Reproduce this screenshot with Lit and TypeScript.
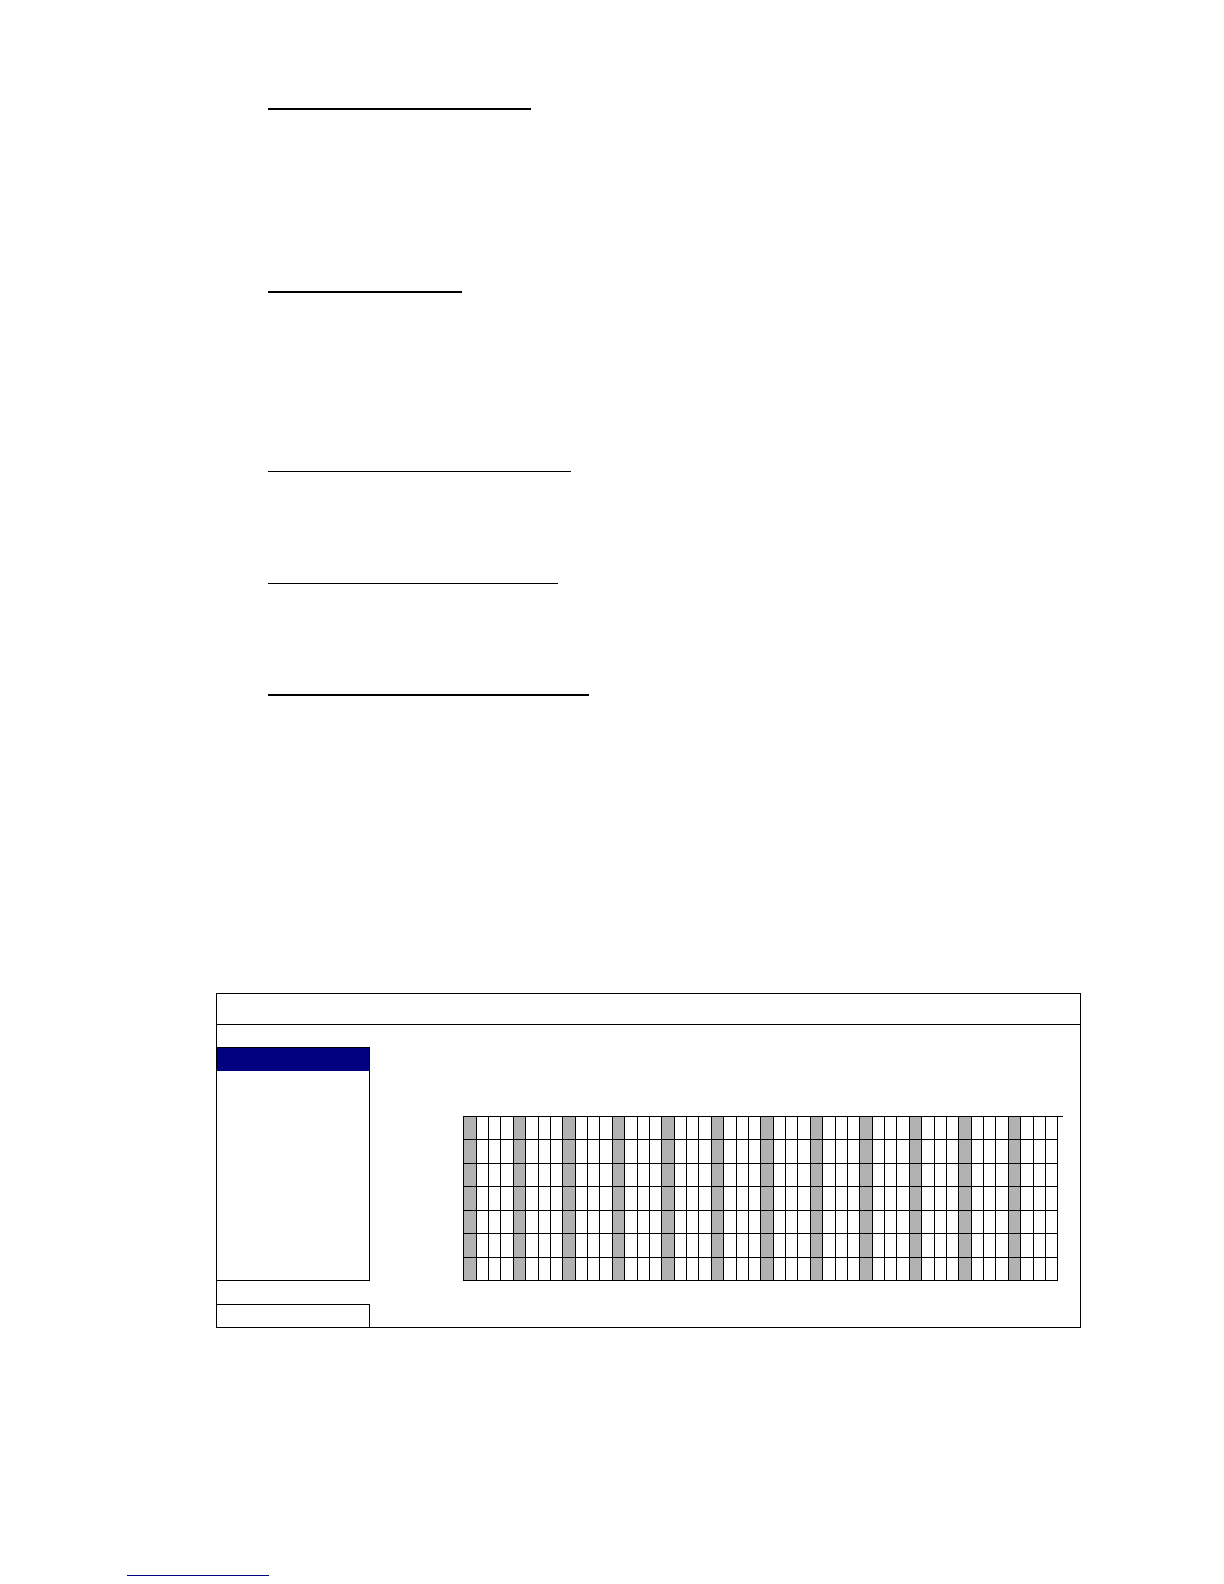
import { LitElement, html, css } from "lit";
import { customElement } from "lit/decorators.js";

const ROWS = 7;
const SLOTS = 48;
const SLOTS_PER_BAND = 4;
const COLUMN_WIDTHS = [13, 12, 12, 13, 12, 13, 12, 12];

const range = (n: number) => Array.from({ length: n }, (_, i) => i);

/** Seven rows of 48 slots, with every fourth slot shaded. */
@customElement("slot-grid")
export class SlotGrid extends LitElement {
  static styles = css`
    :host {
      display: block;
      border-top: 1px solid #000;
      padding-right: 5px;
    }
    .grid {
      width: 100%;
      box-sizing: border-box;
      table-layout: fixed;
      border-collapse: separate;
      border-spacing: 0;
      border-left: 1px solid #000;
    }
    .slot {
      box-sizing: border-box;
      height: 23px;
      padding: 0;
      border-right: 1px solid #000;
      border-bottom: 1px solid #000;
    }
    .row:nth-child(even) .slot {
      height: 24px;
    }
    .shaded {
      background: #b2b2b2;
    }
  `;

  render() {
    return html`
      <table class="grid">
        <colgroup>
          ${range(SLOTS).map(
            (i) => html`<col style="width: ${COLUMN_WIDTHS[i % COLUMN_WIDTHS.length]}px" />`
          )}
        </colgroup>
        <tbody>
          ${range(ROWS).map(
            () => html`<tr class="row">
              ${range(SLOTS).map(
                (i) => html`<td class="slot ${i % SLOTS_PER_BAND === 0 ? "shaded" : ""}"></td>`
              )}
            </tr>`
          )}
        </tbody>
      </table>
    `;
  }
}

/** Framed panel: title bar, side menu with its selected entry, and the grid. */
@customElement("schedule-panel")
export class SchedulePanel extends LitElement {
  static styles = css`
    :host {
      display: block;
      border: 1px solid #000;
    }
    .title {
      height: 30px;
      border-bottom: 1px solid #000;
    }
    .body {
      display: flex;
      gap: 93px;
      padding-right: 17px;
    }
    .side {
      flex: 0 0 153px;
      display: flex;
      flex-direction: column;
      gap: 23px;
      padding-top: 22px;
    }
    .menu {
      box-sizing: border-box;
      min-height: 234px;
      border: 1px solid #000;
      border-left: 0;
    }
    .selected {
      height: 23px;
      background: #000080;
    }
    .status {
      height: 22px;
      border-top: 1px solid #000;
      border-right: 1px solid #000;
    }
    .content {
      flex: 1;
      min-width: 0;
      padding-top: 91px;
    }
  `;

  render() {
    return html`
      <header class="title"></header>
      <div class="body">
        <div class="side">
          <div class="menu"><div class="selected"></div></div>
          <div class="status"></div>
        </div>
        <div class="content"><slot-grid></slot-grid></div>
      </div>
    `;
  }
}

@customElement("app-root")
export class AppRoot extends LitElement {
  static styles = css`
    :host {
      display: block;
      background: #fff;
      font-family: "Liberation Sans", Arial, sans-serif;
    }
    .page {
      display: flow-root;
      padding: 108px 143px 8px 127px;
    }
    .sections {
      padding-left: 141px;
    }
    .rule {
      height: 1px;
      margin: 0 0 110px;
      border: 0;
      background: #000;
    }
    .heavy {
      height: 2px;
    }
    .first {
      width: 263px;
      margin-bottom: 181px;
    }
    .second {
      width: 194px;
      margin-bottom: 178px;
    }
    .third {
      width: 303px;
      margin-bottom: 111px;
    }
    .fourth {
      width: 290px;
    }
    .fifth {
      width: 321px;
      margin-bottom: 0;
    }
    .panel {
      margin: 297px 0 247px 89px;
    }
    .footer-rule {
      width: 142px;
      margin: 0;
      background: #000080;
    }
  `;

  render() {
    return html`
      <main class="page">
        <div class="sections">
          <hr class="rule heavy first" />
          <hr class="rule heavy second" />
          <hr class="rule third" />
          <hr class="rule fourth" />
          <hr class="rule heavy fifth" />
        </div>
        <schedule-panel class="panel"></schedule-panel>
        <hr class="rule footer-rule" />
      </main>
    `;
  }
}
